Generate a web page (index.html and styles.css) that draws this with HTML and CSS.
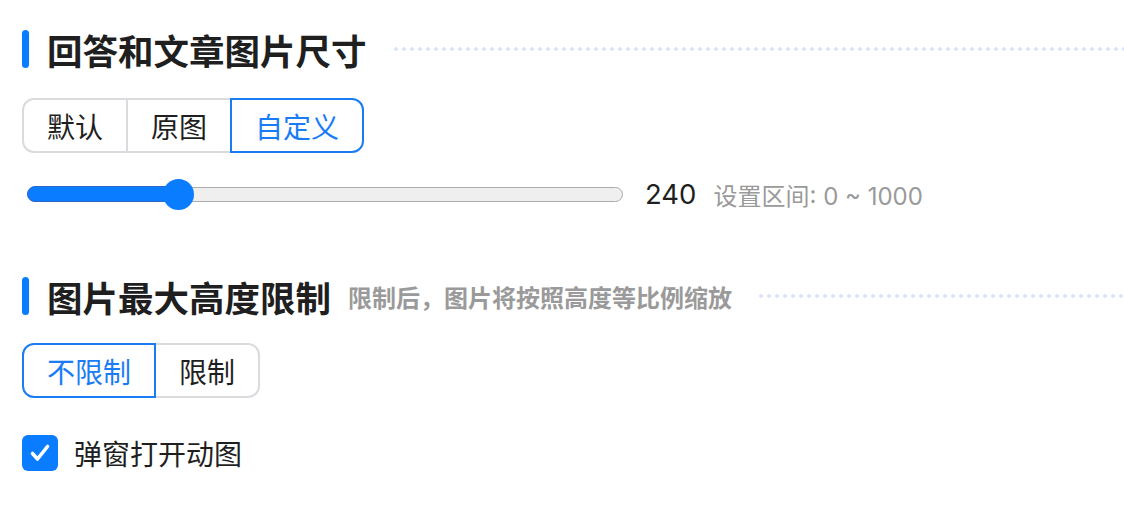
FILE: index.html
```html
<!DOCTYPE html>
<html lang="zh-CN">
<head>
    <meta charset="UTF-8">
    <meta name="viewport" content="width=device-width, initial-scale=1.0">
    <title>图片设置</title>
    <link rel="stylesheet" href="styles.css">
</head>
<body>
    <div class="settings">
        <!-- 回答和文章图片尺寸 -->
        <div class="section">
            <div class="section-title">
                <span class="bar"></span>
                <h2>回答和文章图片尺寸</h2>
                <span class="dots"></span>
            </div>
            <div class="segment">
                <button class="seg-btn">默认</button>
                <button class="seg-btn">原图</button>
                <button class="seg-btn active">自定义</button>
            </div>
            <div class="slider-row">
                <div class="slider">
                    <div class="slider-fill" style="width: 24%;"></div>
                    <div class="slider-thumb" style="left: calc(24% * 0.95 + 15px);"></div>
                </div>
                <span class="slider-value">240</span>
                <span class="slider-hint">设置区间: 0 ~ 1000</span>
            </div>
        </div>

        <!-- 图片最大高度限制 -->
        <div class="section section-2">
            <div class="section-title">
                <span class="bar"></span>
                <h2>图片最大高度限制</h2>
                <span class="subtitle">限制后，图片将按照高度等比例缩放</span>
                <span class="dots"></span>
            </div>
            <div class="segment">
                <button class="seg-btn active">不限制</button>
                <button class="seg-btn">限制</button>
            </div>
            <label class="check">
                <span class="check-box">
                    <svg width="36" height="36" viewBox="0 0 36 36"><path d="M10.5 18.5l5 5.5 10-12.5" fill="none" stroke="#fff" stroke-width="3.6" stroke-linecap="round" stroke-linejoin="round"/></svg>
                </span>
                <span class="check-label">弹窗打开动图</span>
            </label>
        </div>
    </div>
</body>
</html>
```

FILE: styles.css
```css
body {
    margin: 0;
    background: #fff;
    font-family: Inter, "Noto Sans CJK SC", sans-serif;
    color: #1f1f1f;
}

.settings {
    padding: 30px 0 0 22px;
}

.section-title {
    display: flex;
    align-items: center;
    height: 38px;
}

.bar {
    width: 7px;
    height: 38px;
    border-radius: 4px;
    background-color: #0a7cff;
    flex-shrink: 0;
}

.section-title h2 {
    margin: 0 0 0 18px;
    font-family: "Noto Sans CJK SC", sans-serif;
    font-size: 35.5px;
    font-weight: 700;
    color: #1f1f1f;
    white-space: nowrap;
}

.subtitle {
    margin-left: 17px;
    font-family: "Noto Sans CJK SC", sans-serif;
    font-size: 24px;
    font-weight: 700;
    color: #9a9a9a;
    white-space: nowrap;
}

.dots {
    flex: 1;
    height: 4px;
    margin-left: 25px;
    background-image: radial-gradient(circle, #dbe4fa 1.6px, transparent 2px);
    background-size: 8px 4px;
    background-position: 0 0;
}

.segment {
    display: flex;
    margin-top: 30px;
}

.seg-btn {
    height: 55px;
    padding: 0 23px;
    margin: 0;
    border: 2px solid #d9dbde;
    background: #fff;
    font-family: "Noto Sans CJK SC", sans-serif;
    font-size: 28px;
    color: #1f1f1f;
    cursor: pointer;
}

.seg-btn + .seg-btn {
    margin-left: -2px;
}

.seg-btn:first-child {
    border-radius: 12px 0 0 12px;
}

.seg-btn:last-child {
    border-radius: 0 12px 12px 0;
}

.seg-btn.active {
    border-color: #1a7cf5;
    color: #1a7cf5;
    position: relative;
    z-index: 1;
}

.slider-row {
    display: flex;
    align-items: center;
    height: 32px;
    margin-top: 25px;
}

.slider {
    position: relative;
    width: 596px;
    height: 15px;
    margin-left: 5px;
    box-sizing: border-box;
    border: 1.5px solid #acacac;
    border-radius: 8px;
    background-color: #efefef;
}

.slider-fill {
    position: absolute;
    left: -1.5px;
    top: -1.5px;
    bottom: -1.5px;
    border: 1.5px solid #2f68c8;
    border-radius: 8px 0 0 8px;
    background-color: #0a7cff;
}

.slider-thumb {
    position: absolute;
    top: 50%;
    width: 31px;
    height: 31px;
    margin: -15.5px 0 0 -15.5px;
    border-radius: 50%;
    background-color: #0a7cff;
}

.slider-value {
    margin-left: 22px;
    font-size: 27.5px;
    color: #1f1f1f;
}

.slider-hint {
    margin-left: 17px;
    font-size: 24px;
    color: #9a9a9a;
}

.section-2 {
    margin-top: 67px;
}

.section-2 .segment {
    margin-top: 28px;
}

.check {
    display: flex;
    align-items: center;
    margin-top: 35px;
    cursor: pointer;
}

.check-box {
    display: flex;
    width: 36px;
    height: 36px;
    border-radius: 6px;
    background-color: #0a7cff;
}

.check-label {
    margin-left: 16px;
    font-family: "Noto Sans CJK SC", sans-serif;
    font-size: 28px;
    color: #1f1f1f;
}
```
